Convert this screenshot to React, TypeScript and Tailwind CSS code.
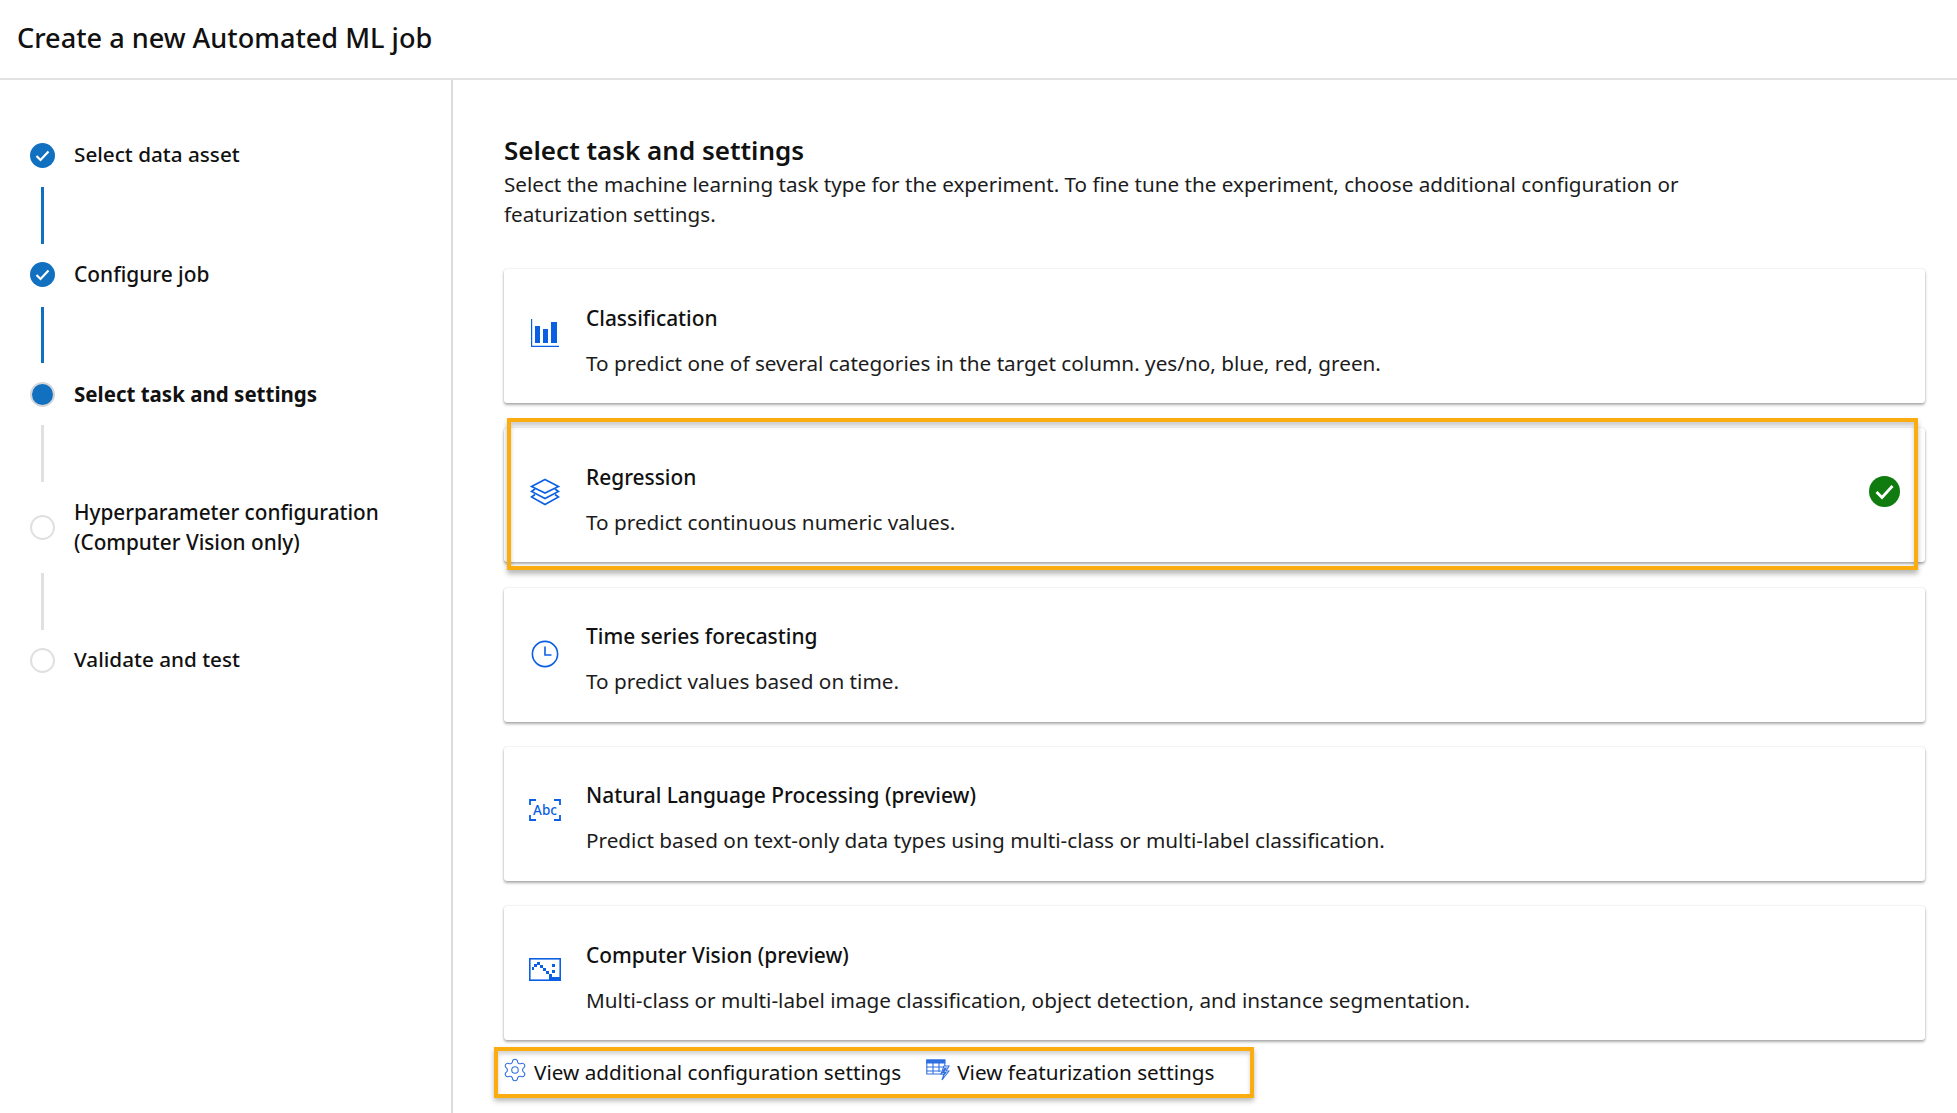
import React from 'react';
import { Settings } from 'lucide-react';

const font = { fontFamily: '"Noto Sans", sans-serif' };

function StepDone() {
  return (
    <svg width="25" height="25" viewBox="0 0 25 25" className="shrink-0">
      <circle cx="12.5" cy="12.5" r="12.5" fill="#1170c0" />
      <path d="M6.5 13l4 4 8-8.5" fill="none" stroke="#fff" strokeWidth="2.2" />
    </svg>
  );
}

function StepCurrent() {
  return (
    <div className="w-[25px] h-[25px] shrink-0 rounded-full border-2 border-[#d6d6d6] bg-[#1170c0]" />
  );
}

function StepTodo() {
  return <div className="w-[25px] h-[25px] shrink-0 rounded-full border-2 border-[#e0e0e0] bg-white" />;
}

function BarsIcon() {
  return (
    <svg width="28" height="28" viewBox="0 0 28 28" fill="#0b5fe3" className="-mt-[7px]">
      <path d="M0 0h1.2v26.8H28V28H0z" />
      <rect x="4" y="7" width="5" height="17" />
      <rect x="12" y="10" width="5" height="14" />
      <rect x="20" y="3" width="6" height="21" />
    </svg>
  );
}

function LayersIcon() {
  return (
    <svg width="32" height="28" viewBox="0 0 32 28" fill="none" stroke="#0b5fe3" strokeWidth="1.6" className="-mt-[7px]">
      <path d="M16 1.5 29.5 8.5 16 15 2.5 8.5z" fill="#fff" />
      <path d="M6 11 2.5 13.5 16 20.5 29.5 13.5 26 11" />
      <path d="M6 16.5 2.5 19 16 26.5 29.5 19 26 16.5" />
    </svg>
  );
}

function ClockIcon() {
  return (
    <svg width="28" height="28" viewBox="0 0 28 28" fill="none" stroke="#0b5fe3" strokeWidth="1.6" className="-mt-[2px]">
      <circle cx="14" cy="14" r="12.6" />
      <path d="M14 6.5V15h6.5" />
    </svg>
  );
}

function AbcIcon() {
  return (
    <svg width="32" height="22" viewBox="0 0 32 22" fill="none" className="-mt-[7px]">
      <path d="M7 1H1v5M25 1h6v5M1 16v5h6M31 16v5h-6" stroke="#0b5fe3" strokeWidth="1.8" />
      <text x="16" y="15.5" textAnchor="middle" fontSize="13.5" fontWeight="500" fill="#0b5fe3" style={font}>Abc</text>
    </svg>
  );
}

function PictureIcon() {
  return (
    <svg width="32" height="23" viewBox="0 0 32 23" className="-mt-[7px]">
      <rect x="0.8" y="0.8" width="30.4" height="21.4" fill="#fff" stroke="#0b5fe3" strokeWidth="1.6" />
      <path
        d="M5 6h3v3H5zM8 4h3v3H8zM11 7h3v3h-3zM14 10h3v3h-3zM17 13h3v3h-3zM20 16h3v3h-3zM23 6h3v3h-3zM23 12h3v3h-3zM3 9h2v3H3z"
        fill="#0b5fe3"
      />
      <path d="M20 19h12v4H20z" fill="#0b5fe3" />
    </svg>
  );
}

function FeatureIcon() {
  return (
    <svg width="24" height="22" viewBox="0 0 24 22" fill="none" stroke="#2f6fe0" strokeWidth="1.1">
      <path d="M.8 1h18v14H.8z" />
      <path d="M.8 1h18v3H.8z" fill="#2f6fe0" />
      <path d="M.8 8h18M.8 12h14M7 4v11M13 4v9" />
      <path d="M18 7h5l-3 5h3l-7 9 2-6h-3z" fill="#fff" />
      <path d="M18.5 8.5h2.5l-2.5 4.5h2.5l-4 5 1-4h-2.5z" fill="#2f6fe0" stroke="none" />
    </svg>
  );
}

function TaskCard({ icon, title, desc, selected }: { icon: React.ReactNode; title: string; desc: string; selected?: boolean }) {
  return (
    <div className="relative h-[134px] flex items-center rounded-[3px] bg-white shadow-[0_2px_3px_rgba(0,0,0,0.32),0_0_2px_rgba(0,0,0,0.14)]">
      <div className="w-[82px] shrink-0 flex justify-center">{icon}</div>
      <div className="flex flex-col gap-[15px] pt-[8px]">
        <div className="text-[20.9px] leading-[30px] font-medium text-[#111]">{title}</div>
        <div className="text-[20.72px] leading-[30px] text-[#1c1c1c]">{desc}</div>
      </div>
      {selected && (
        <>
          <svg width="31" height="31" viewBox="0 0 31 31" className="absolute right-[25px] top-[48px]">
            <circle cx="15.5" cy="15.5" r="15.5" fill="#107c10" />
            <path d="M7.5 16l5.5 5.5L23.5 10" fill="none" stroke="#fff" strokeWidth="2.8" />
          </svg>
          <div className="absolute left-[3px] right-[7px] -top-[10px] -bottom-[8px] border-4 border-[#fbad0f] shadow-[0_4px_5px_rgba(0,0,0,0.28),inset_0_4px_4px_rgba(0,0,0,0.2)]" />
        </>
      )}
    </div>
  );
}

const tasks = [
  { icon: <BarsIcon />, title: 'Classification', desc: 'To predict one of several categories in the target column. yes/no, blue, red, green.' },
  { icon: <LayersIcon />, title: 'Regression', desc: 'To predict continuous numeric values.', selected: true },
  { icon: <ClockIcon />, title: 'Time series forecasting', desc: 'To predict values based on time.' },
  { icon: <AbcIcon />, title: 'Natural Language Processing (preview)', desc: 'Predict based on text-only data types using multi-class or multi-label classification.' },
  { icon: <PictureIcon />, title: 'Computer Vision (preview)', desc: 'Multi-class or multi-label image classification, object detection, and instance segmentation.' },
];

export default function App() {
  return (
    <div className="h-screen overflow-hidden bg-white flex flex-col text-[#111]" style={font}>
      <header className="h-[80px] shrink-0 border-b-2 border-[#e2e2e2] flex items-center pl-[17px] pb-[1px]">
        <h1 className="text-[27.1px] font-medium">Create a new Automated ML job</h1>
      </header>
      <div className="flex flex-1 min-h-0">
        <aside className="w-[453px] shrink-0 border-r-2 border-[#dcdcdc] pl-[30px] pt-[63px]">
          <div className="flex items-center gap-[19px] h-[25px]">
            <StepDone />
            <span className="text-[20.7px] font-medium -mt-[1px]">Select data asset</span>
          </div>
          <div className="w-[3px] h-[57px] ml-[11px] mt-[19px] mb-[18px] bg-[#1170c0]" />
          <div className="flex items-center gap-[19px] h-[25px]">
            <StepDone />
            <span className="text-[20.9px] font-medium">Configure job</span>
          </div>
          <div className="w-[3px] h-[56px] ml-[11px] mt-[20px] mb-[19px] bg-[#1170c0]" />
          <div className="flex items-center gap-[19px] h-[25px]">
            <StepCurrent />
            <span className="text-[20.5px] font-bold">Select task and settings</span>
          </div>
          <div className="w-[3px] h-[57px] ml-[11px] mt-[18px] mb-[15px] bg-[#e0e0e0]" />
          <div className="flex items-center gap-[19px] h-[60px]">
            <StepTodo />
            <span className="text-[20.75px] leading-[30px] font-medium">
              Hyperparameter configuration
              <br />
              (Computer Vision only)
            </span>
          </div>
          <div className="w-[3px] h-[57px] ml-[11px] mt-[16px] mb-[18px] bg-[#e0e0e0]" />
          <div className="flex items-center gap-[19px] h-[25px]">
            <StepTodo />
            <span className="text-[20.7px] font-medium -mt-[1px]">Validate and test</span>
          </div>
        </aside>
        <main className="flex-1 min-w-0 pl-[51px] pr-[32px] pt-[52px]">
          <h2 className="text-[26px] leading-[37px] font-semibold">Select task and settings</h2>
          <p className="text-[20.65px] leading-[30px] text-[#1c1c1c]">
            Select the machine learning task type for the experiment. To fine tune the experiment, choose additional configuration or
            <br />
            featurization settings.
          </p>
          <div className="mt-[40px] flex flex-col gap-[25.25px]">
            {tasks.map((t) => (
              <TaskCard key={t.title} {...t} />
            ))}
          </div>
          <div className="mt-[7px] -ml-[10px] w-[760px] h-[51px] border-4 border-[#fbad0f] flex items-center pl-[4px] shadow-[0_3px_5px_rgba(0,0,0,0.28),inset_0_3px_4px_rgba(0,0,0,0.18)]">
            <Settings size={26} strokeWidth={1} color="#2f6fe0" className="-mt-[6px]" />
            <span className="ml-[6px] -mt-[1px] text-[20.7px] leading-[30px]">View additional configuration settings</span>
            <span className="ml-[25px] -mt-[6px]"><FeatureIcon /></span>
            <span className="ml-[7px] -mt-[1px] text-[20.7px] leading-[30px]">View featurization settings</span>
          </div>
        </main>
      </div>
    </div>
  );
}
